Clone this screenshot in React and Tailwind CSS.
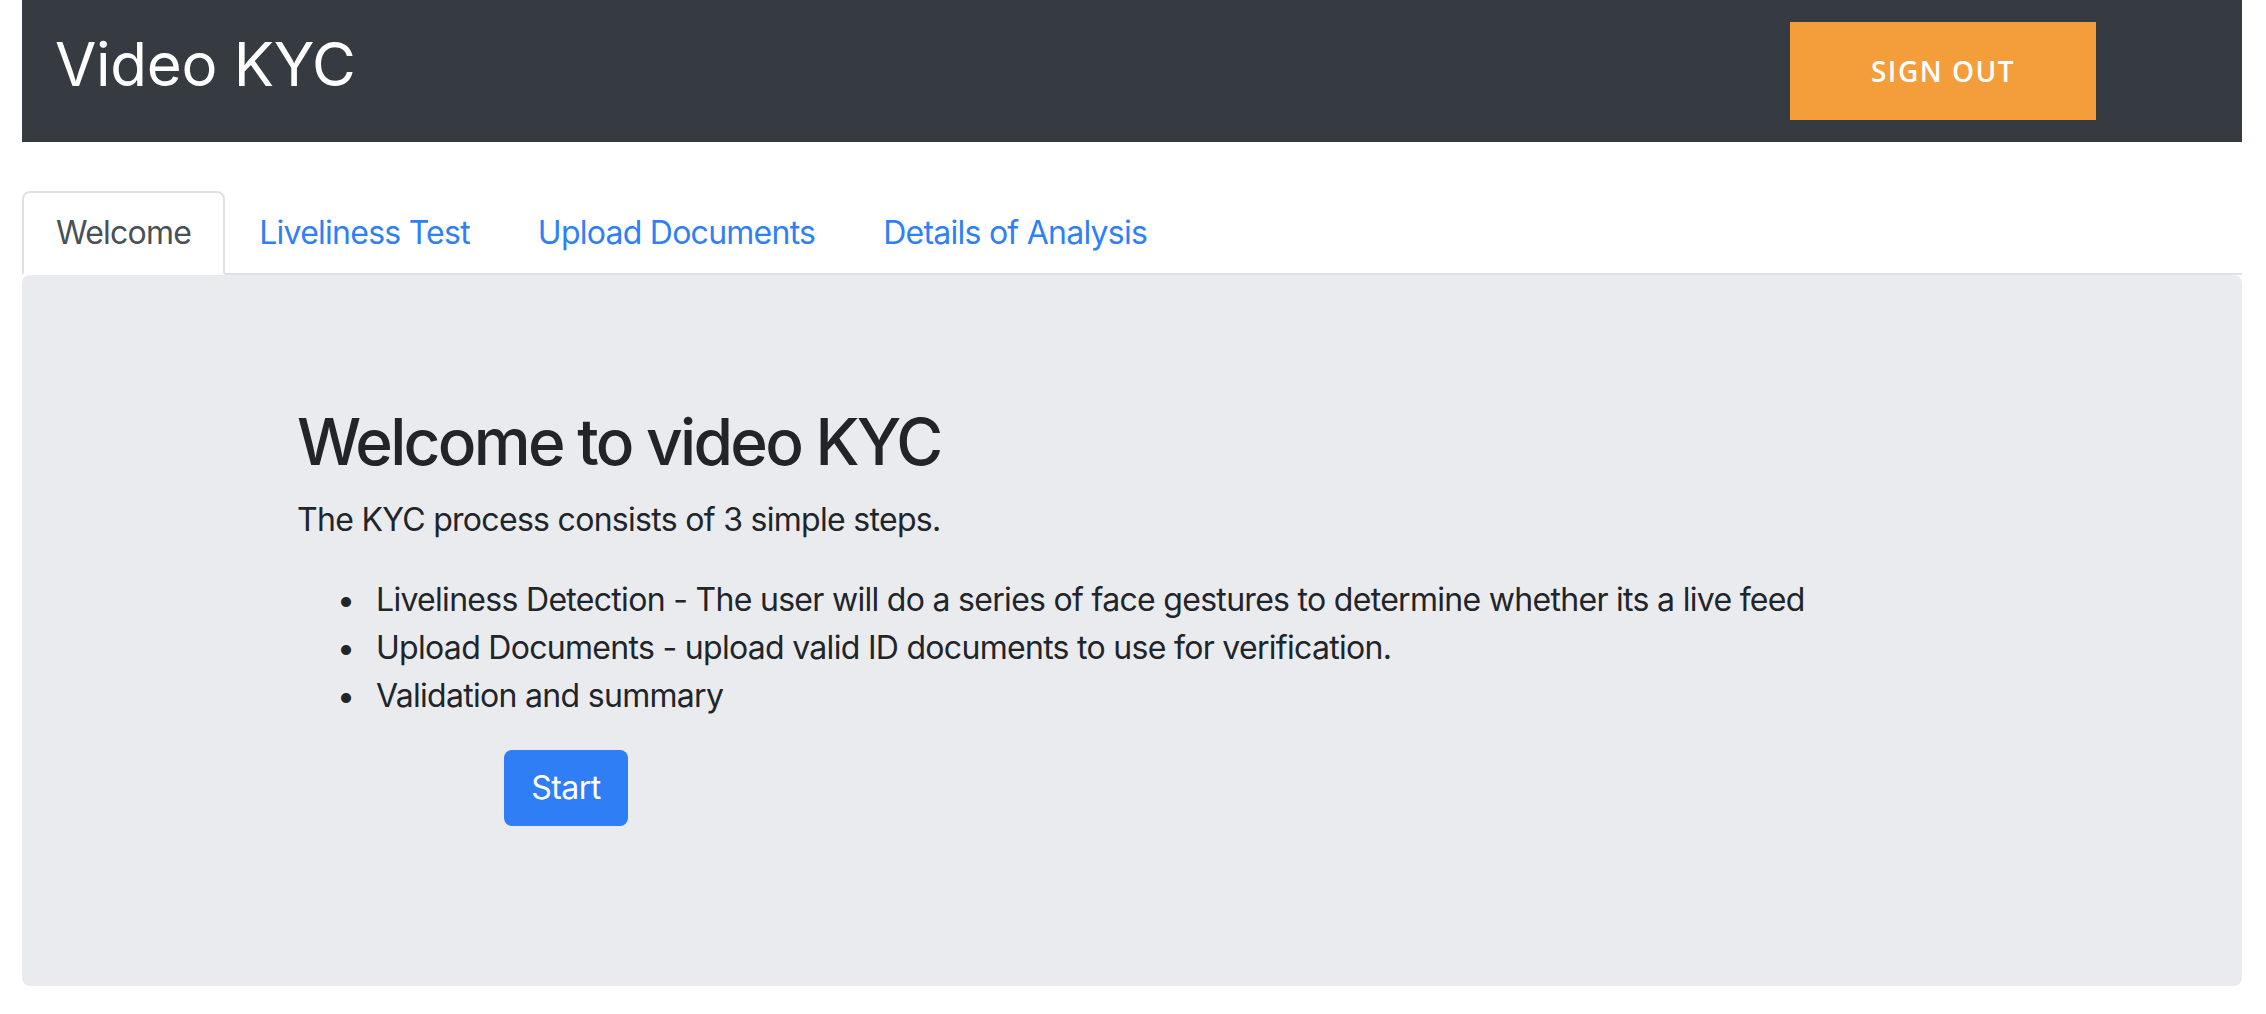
const TABS = ['Welcome', 'Liveliness Test', 'Upload Documents', 'Details of Analysis'];

const STEPS = [
  'Liveliness Detection - The user will do a series of face gestures to determine whether its a live feed',
  'Upload Documents - upload valid ID documents to use for verification.',
  'Validation and summary',
];

function Header() {
  return (
    <header className="flex h-[142px] items-start justify-between bg-[#363a41] pl-[33px] pr-[146px]">
      <h1 className="pt-[28px] text-[60px] leading-[72px] font-normal tracking-[-0.3px] text-white">Video KYC</h1>
      <button className="mt-[22px] h-[98px] w-[306px] bg-[#f39e3a] font-['Open_Sans',sans-serif] text-[28px] font-semibold tracking-[1.5px] text-white">
        SIGN OUT
      </button>
    </header>
  );
}

function Tabs({ active = 0 }) {
  return (
    <nav className="mt-[49px] flex border-b-2 border-[#dee2e6]">
      {TABS.map((label, i) => (
        <a
          key={label}
          className={
            i === active
              ? '-mb-[2px] rounded-t-[8px] border-2 border-[#dee2e6] border-b-white bg-white px-[32px] py-[16px] text-[32px] leading-[48px] tracking-[-0.75px] text-[#495057]'
              : '-mb-[2px] rounded-t-[8px] border-2 border-transparent px-[32px] py-[16px] text-[32px] leading-[48px] tracking-[-0.75px] text-[#2f7ff7]'
          }
        >
          {label}
        </a>
      ))}
    </nav>
  );
}

export default function App() {
  return (
    <div className="min-h-[1014px] bg-white px-[22px] pr-[24px] font-['Inter',sans-serif] text-[#212529]">
      <Header />
      <Tabs />
      <section className="rounded-[8px] bg-[#eaebef] pt-[128px] pb-[128px] pl-[275px]">
        <h2 className="mb-[16px] text-[64px] leading-[77px] font-medium tracking-[-2.7px]">Welcome to video KYC</h2>
        <p className="mb-[32px] text-[32px] leading-[48px] tracking-[-0.7px]">The KYC process consists of 3 simple steps.</p>
        <ul className="mb-[30px] pl-[40px] text-[32px] leading-[48px] tracking-[-0.7px]">
          {STEPS.map((s) => (
            <li key={s} className="flex">
              <span className="w-[39px] shrink-0">•</span>
              {s}
            </li>
          ))}
        </ul>
        <button className="mb-[32px] ml-[207px] h-[76px] w-[124px] rounded-[8px] bg-[#2f7ef6] text-[32px] tracking-[-0.5px] text-white">
          Start
        </button>
      </section>
    </div>
  );
}
